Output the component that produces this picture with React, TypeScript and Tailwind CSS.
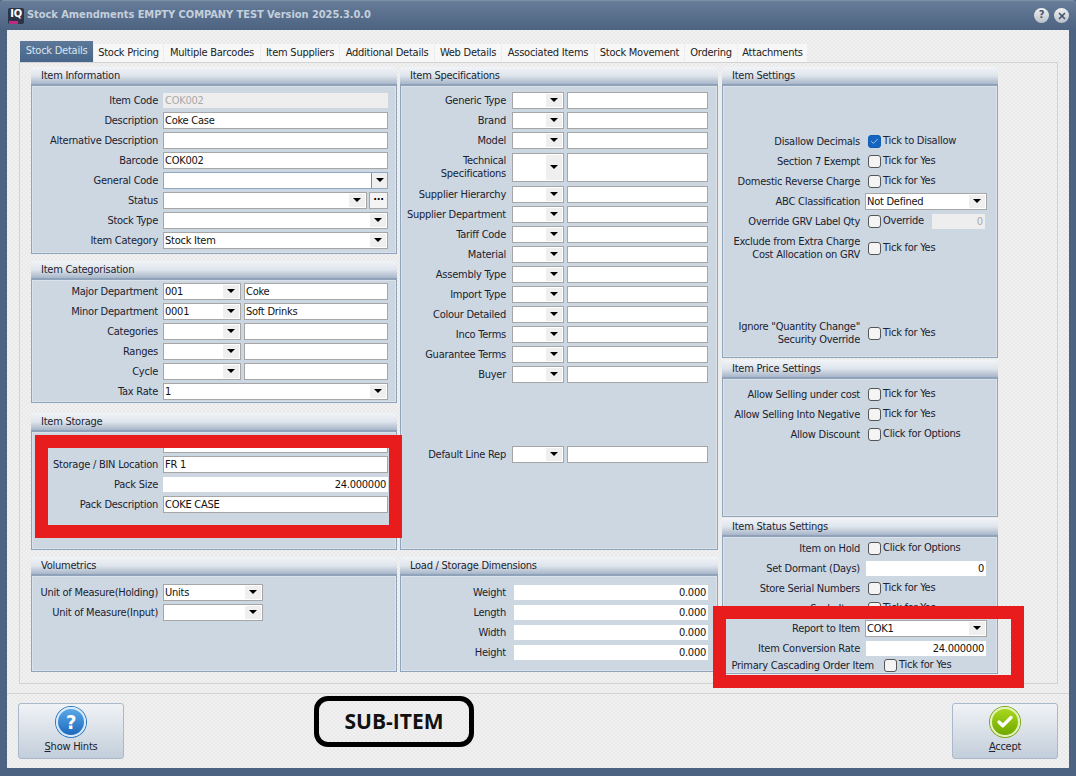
import type { ReactNode } from "react";
import { Check, X } from "lucide-react";

const COL1 = "w-[130px] pr-[5px]";
const COL2 = "w-[110px] pr-[6px]";
const COL3 = "w-[136px]";

function Panel({ title, height, top, children }: { title: string; height: string; top: string; children?: ReactNode }) {
  return (
    <div className={`flex flex-col ${height}`}>
      <div className="h-[18px] shrink-0 rounded-t-[4px] border-b border-[#8fa2ba] bg-gradient-to-b from-[#f1f4f8] via-[#dfe5ec] to-[#a8b6c9] pl-[10px] text-[#1c2430] leading-[18px]">
        {title}
      </div>
      <div className="flex-1 border border-[#8fa3bb]">
        <div className={`h-full border border-[#dbe2ea] bg-[#cdd7e2] ${top}`}>{children}</div>
      </div>
    </div>
  );
}

function Row({ label, w, h = "h-[20px]", children }: { label: ReactNode; w: string; h?: string; children?: ReactNode }) {
  return (
    <div className={`flex items-center ${h}`}>
      <div className={`${w} shrink-0 whitespace-nowrap text-right leading-[13px] text-[#1a2230]`}>{label}</div>
      {children}
    </div>
  );
}

function Text({ value = "", w = "flex-1", right, h = "h-[17px]" }: { value?: string; w?: string; right?: boolean; h?: string }) {
  return (
    <div className={`${w} ${h} border border-[#a6a6a6] bg-white px-[1px] leading-[15px] text-[#111] ${right ? "text-right" : ""}`}>
      {value}
    </div>
  );
}

function Flat({ value, w = "flex-1", ml = "" }: { value: string; w?: string; ml?: string }) {
  return <div className={`${w} ${ml} h-[15px] bg-white px-[2px] text-right leading-[15px] text-[#111]`}>{value}</div>;
}

function Arrow() {
  return (
    <div className="absolute bottom-[1px] right-[1px] top-[1px] flex w-[16px] items-center justify-center bg-[#efefef]">
      <div className="h-0 w-0 border-x-[4px] border-t-[4px] border-x-transparent border-t-black" />
    </div>
  );
}

function Combo({ value = "", w = "flex-1", h = "h-[17px]", ml = "" }: { value?: string; w?: string; h?: string; ml?: string }) {
  return (
    <div className={`relative ${w} ${h} ${ml} border border-[#a6a6a6] bg-white px-[1px] leading-[15px] text-[#111]`}>
      {value}
      <Arrow />
    </div>
  );
}

function Tick({ label, checked, ml = "ml-[8px]" }: { label: string; checked?: boolean; ml?: string }) {
  return (
    <div className={`flex items-center ${ml}`}>
      <div
        className={`flex h-[13px] w-[13px] items-center justify-center rounded-[3px] border ${
          checked ? "border-[#0f5cb0] bg-[#1464c0]" : "border-[#555] bg-[#f4f4f4]"
        }`}
      >
        {checked && <Check size={9} strokeWidth={2} className="text-[#cfe2f7]" />}
      </div>
      <span className="ml-[2px] mt-[1px] whitespace-nowrap text-[#1a2230]">{label}</span>
    </div>
  );
}

const tabs = [
  { name: "Stock Pricing", w: "w-[69px]" },
  { name: "Multiple Barcodes", w: "w-[96px]" },
  { name: "Item Suppliers", w: "w-[78px]" },
  { name: "Additional Details", w: "w-[94px]" },
  { name: "Web Details", w: "w-[66px]" },
  { name: "Associated Items", w: "w-[92px]" },
  { name: "Stock Movement", w: "w-[89px]" },
  { name: "Ordering", w: "w-[52px]" },
  { name: "Attachments", w: "w-[69px]" },
];

const specs = ["Supplier Hierarchy", "Supplier Department", "Tariff Code", "Material", "Assembly Type", "Import Type", "Colour Detailed", "Inco Terms", "Guarantee Terms", "Buyer"];

function SpecFields({ h = "h-[17px]" }: { h?: string }) {
  return (
    <>
      <Combo w="w-[52px]" h={h} />
      <Text w="w-[141px] ml-[3px]" h={h} />
    </>
  );
}

function BigButton({ icon, children }: { icon: ReactNode; children: ReactNode }) {
  return (
    <div className="flex h-[56px] w-[106px] flex-col items-center rounded-[3px] border border-[#a9b8ca] bg-gradient-to-b from-[#f0f3f6] to-[#c3cedb] pt-[3px] text-[#1a2230]">
      {icon}
      <div className="mt-[3px] leading-[14px]">{children}</div>
    </div>
  );
}

export default function App() {
  return (
    <div className="relative flex h-[776px] w-[1076px] flex-col overflow-hidden bg-[#4c6381] font-['DejaVu_Sans_Condensed','DejaVu_Sans',sans-serif] text-[11px] tracking-[-0.25px]">
      {/* title bar */}
      <div className="flex h-[30px] shrink-0 items-center rounded-t-[4px] border-t border-[#7d90a8] bg-gradient-to-b from-[#667c99] to-[#4c6381] pl-[8px] pr-[7px]">
        <div className="relative flex h-[16px] w-[16px] items-start justify-center overflow-hidden rounded-[2px] bg-[#2c3344] text-[11px] font-bold leading-[12px] text-white">
          IQ
          <div className="absolute bottom-0 left-[1px] h-[3px] w-[9px] bg-[#c02a80]" />
        </div>
        <div className="ml-[3px] font-bold tracking-[-0.05px] text-[#c4cfdc]">Stock Amendments EMPTY COMPANY TEST Version 2025.3.0.0</div>
        <div className="ml-auto flex gap-[5px]">
          <div className="flex h-[15px] w-[15px] items-center justify-center rounded-full bg-gradient-to-b from-[#f2f2f2] to-[#b9c0c9] text-[11px] font-bold text-[#44566e]">?</div>
          <div className="flex h-[15px] w-[15px] items-center justify-center rounded-full bg-gradient-to-b from-[#f2f2f2] to-[#b9c0c9] text-[#44566e]">
            <X size={10} strokeWidth={4} />
          </div>
        </div>
      </div>

      {/* client area */}
      <div className="mx-[7px] mb-[8px] flex flex-1 flex-col bg-[#eeeeee] bg-[repeating-conic-gradient(#f1f1f1_0_25%,#e9e9e9_0_50%)] bg-[length:4px_4px]">
        <div className="flex h-[32px] items-end gap-[1px] pl-[13px]">
          <div className="z-10 flex h-[21px] w-[73px] items-center justify-center bg-gradient-to-b from-[#5d7898] to-[#47668a] text-[#dbe4ee]">Stock Details</div>
          {tabs.map((t) => (
            <div key={t.name} className={`flex h-[18px] ${t.w} items-center justify-center whitespace-nowrap bg-[#f7f7f7] text-[#222]`}>
              {t.name}
            </div>
          ))}
        </div>

        <div className="ml-[12px] flex h-[622px] w-[1039px] gap-[3px] border border-[#d2d2d2] pl-[11px] pt-[4px]">
          {/* left column */}
          <div className="flex w-[366px] flex-col">
            <Panel title="Item Information" height="h-[187px]" top="pt-[3px] pr-[7px]">
              <Row label="Item Code" w={COL1}>
                <div className="h-[15px] flex-1 bg-[#eeeeee] px-[2px] leading-[15px] text-[#a9a9a9]">COK002</div>
              </Row>
              <Row label="Description" w={COL1}><Text value="Coke Case" /></Row>
              <Row label="Alternative Description" w={COL1}><Text /></Row>
              <Row label="Barcode" w={COL1}><Text value="COK002" /></Row>
              <Row label="General Code" w={COL1}>
                <div className="relative h-[17px] flex-1 border border-[#8fa6c4] bg-white">
                  <div className="absolute bottom-0 right-0 top-0 flex w-[16px] items-center justify-center border-l border-[#8b8b8b] bg-[#efefef]">
                    <div className="h-0 w-0 border-x-[4px] border-t-[4px] border-x-transparent border-t-black" />
                  </div>
                </div>
              </Row>
              <Row label="Status" w={COL1}>
                <Combo />
                <div className="ml-[2px] flex h-[17px] w-[19px] items-center justify-center border border-[#a6a6a6] bg-[#f4f4f4] text-[11px] font-bold leading-[8px] text-black">···</div>
              </Row>
              <Row label="Stock Type" w={COL1}><Combo /></Row>
              <Row label="Item Category" w={COL1}><Combo value="Stock Item" /></Row>
            </Panel>

            <div className="h-[7px] shrink-0" />
            <Panel title="Item Categorisation" height="h-[142px]" top="pr-[7px]">
              <Row label="Major Department" w={COL1}><Combo value="001" w="w-[78px]" /><Text value="Coke" w="w-[144px] ml-[3px]" /></Row>
              <Row label="Minor Department" w={COL1}><Combo value="0001" w="w-[78px]" /><Text value="Soft Drinks" w="w-[144px] ml-[3px]" /></Row>
              <Row label="Categories" w={COL1}><Combo w="w-[78px]" /><Text w="w-[144px] ml-[3px]" /></Row>
              <Row label="Ranges" w={COL1}><Combo w="w-[78px]" /><Text w="w-[144px] ml-[3px]" /></Row>
              <Row label="Cycle" w={COL1}><Combo w="w-[78px]" /><Text w="w-[144px] ml-[3px]" /></Row>
              <Row label="Tax Rate" w={COL1}><Combo value="1" /></Row>
            </Panel>

            <div className="h-[10px] shrink-0" />
            <Panel title="Item Storage" height="h-[137px]" top="pt-[1px] pr-[7px]">
              <Row label="" w={COL1}><Text /></Row>
              <Row label="Storage / BIN Location" w={COL1}><Text value="FR 1" /></Row>
              <Row label="Pack Size" w={COL1}><Flat value="24.000000" /></Row>
              <Row label="Pack Description" w={COL1}><Text value="COKE CASE" /></Row>
            </Panel>

            <div className="h-[7px] shrink-0" />
            <Panel title="Volumetrics" height="h-[115px]" top="pt-[5px]">
              <Row label="Unit of Measure(Holding)" w={COL1}><Combo value="Units" w="w-[100px]" /></Row>
              <Row label="Unit of Measure(Input)" w={COL1}><Combo w="w-[100px]" /></Row>
            </Panel>
          </div>

          {/* middle column */}
          <div className="flex w-[318px] flex-col">
            <Panel title="Item Specifications" height="h-[483px]" top="pt-[3px]">
              <Row label="Generic Type" w={COL2}><SpecFields /></Row>
              <Row label="Brand" w={COL2}><SpecFields /></Row>
              <Row label="Model" w={COL2}><SpecFields /></Row>
              <Row label={<>Technical<br />Specifications</>} w={COL2} h="h-[34px]"><SpecFields h="h-[29px]" /></Row>
              {specs.map((s) => (
                <Row key={s} label={s} w={COL2}><SpecFields /></Row>
              ))}
              <div className="h-[60px]" />
              <Row label="Default Line Rep" w={COL2}><SpecFields /></Row>
            </Panel>
            <div className="h-[7px] shrink-0" />
            <Panel title="Load / Storage Dimensions" height="h-[115px]" top="pt-[5px]">
              <Row label="Weight" w={COL2}><Flat value="0.000" w="w-[194px]" ml="ml-[2px]" /></Row>
              <Row label="Length" w={COL2}><Flat value="0.000" w="w-[194px]" ml="ml-[2px]" /></Row>
              <Row label="Width" w={COL2}><Flat value="0.000" w="w-[194px]" ml="ml-[2px]" /></Row>
              <Row label="Height" w={COL2}><Flat value="0.000" w="w-[194px]" ml="ml-[2px]" /></Row>
            </Panel>
          </div>

          {/* right column */}
          <div className="ml-[1px] flex w-[276px] flex-col">
            <Panel title="Item Settings" height="h-[291px]" top="pt-[44px]">
              <Row label="Disallow Decimals" w={COL3}><Tick label="Tick to Disallow" checked /></Row>
              <Row label="Section 7 Exempt" w={COL3}><Tick label="Tick for Yes" /></Row>
              <Row label="Domestic Reverse Charge" w={COL3}><Tick label="Tick for Yes" /></Row>
              <Row label="ABC Classification" w={COL3}><Combo value="Not Defined" w="w-[122px]" ml="ml-[5px]" /></Row>
              <Row label="Override GRV Label Qty" w={COL3}>
                <Tick label="Override" />
                <div className="ml-[8px] h-[15px] w-[53px] bg-[#eeeeee] px-[2px] text-right leading-[15px] text-[#a9a9a9]">0</div>
              </Row>
              <Row label={<>Exclude from Extra Charge<br />Cost Allocation on GRV</>} w={COL3} h="h-[34px]"><Tick label="Tick for Yes" /></Row>
              <div className="h-[51px]" />
              <Row label={<>Ignore "Quantity Change"<br />Security Override</>} w={COL3} h="h-[34px]"><Tick label="Tick for Yes" /></Row>
            </Panel>
            <div className="h-[2px] shrink-0" />
            <Panel title="Item Price Settings" height="h-[157px]" top="pt-[4px]">
              <Row label="Allow Selling under cost" w={COL3}><Tick label="Tick for Yes" /></Row>
              <Row label="Allow Selling Into Negative" w={COL3}><Tick label="Tick for Yes" /></Row>
              <Row label="Allow Discount" w={COL3}><Tick label="Click for Options" /></Row>
            </Panel>
            <div className="h-px shrink-0" />
            <Panel title="Item Status Settings" height="h-[154px]" top="">
              <Row label="Item on Hold" w={COL3}><Tick label="Click for Options" /></Row>
              <Row label="Set Dormant (Days)" w={COL3}><Flat value="0" w="w-[120px]" ml="ml-[6px]" /></Row>
              <Row label="Store Serial Numbers" w={COL3}><Tick label="Tick for Yes" /></Row>
              <Row label="Scale Item" w={COL3}><Tick label="Tick for Yes" /></Row>
              <Row label="Report to Item" w={COL3}><Combo value="COK1" w="w-[122px]" ml="ml-[5px]" /></Row>
              <Row label="Item Conversion Rate" w={COL3}><Flat value="24.000000" w="w-[120px]" ml="ml-[6px]" /></Row>
              <Row label="Primary Cascading Order Item" w="w-[150px]" h="h-[14px]"><Tick label="Tick for Yes" ml="ml-[10px]" /></Row>
            </Panel>
          </div>
        </div>

        {/* footer */}
        <div className="mt-[9px] flex flex-1 items-start border-t border-[#d2d2d2] px-[11px]">
          <div className="mt-[9px]">
            <BigButton
              icon={
                <div className="flex h-[30px] w-[30px] items-center justify-center rounded-full border-2 border-[#dbe9f7] bg-gradient-to-b from-[#5aa8e8] to-[#1b69bd] text-[20px] font-bold text-white shadow-[0_0_0_1px_#2a78c4]">?</div>
              }
            >
              <span className="underline">S</span>how Hints
            </BigButton>
          </div>
          <div className="ml-[190px] mt-[2px] flex h-[51px] w-[160px] items-center justify-center rounded-[14px] border-[5px] border-black font-['Open_Sans',sans-serif] text-[21px] font-bold tracking-normal text-[#111]">
            SUB-ITEM
          </div>
          <div className="ml-auto mt-[9px]">
            <BigButton
              icon={
                <div className="flex h-[30px] w-[30px] items-center justify-center rounded-full border-2 border-[#e4f2b8] bg-gradient-to-b from-[#a8d81c] to-[#6fa800] shadow-[0_0_0_1px_#7aa80e]">
                  <Check size={18} strokeWidth={4.5} className="text-white" />
                </div>
              }
            >
              <span className="underline">A</span>ccept
            </BigButton>
          </div>
        </div>
      </div>

      {/* red annotation frames */}
      <div className="absolute left-[35px] top-[435px] h-[103px] w-[367px] border-[13px] border-[#e81c1c]" />
      <div className="absolute left-[713px] top-[606px] h-[82px] w-[311px] border-[13px] border-[#e81c1c]" />
    </div>
  );
}
